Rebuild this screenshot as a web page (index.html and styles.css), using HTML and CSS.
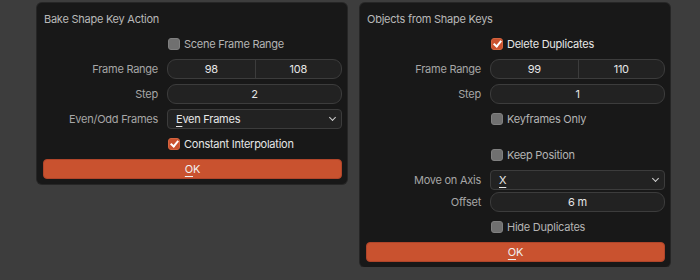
FILE: index.html
```html
<!DOCTYPE html>
<html lang="en">
<head>
    <meta charset="UTF-8">
    <title>Shape Key Operators</title>
    <link rel="stylesheet" href="styles.css">
</head>
<body>
    <div class="desk">
        <!-- Bake Shape Key Action -->
        <div class="panel">
            <div class="title">Bake Shape Key Action</div>
            <div class="row">
                <span class="label"></span>
                <label class="check"><span class="box"></span>Scene Frame Range</label>
            </div>
            <div class="row">
                <span class="label">Frame Range</span>
                <div class="field split"><span>98</span><span>108</span></div>
            </div>
            <div class="row">
                <span class="label">Step</span>
                <div class="field">2</div>
            </div>
            <div class="row">
                <span class="label">Even/Odd Frames</span>
                <div class="menu"><span><u>E</u>ven Frames</span><span class="chev"></span></div>
            </div>
            <div class="row">
                <span class="label"></span>
                <label class="check on"><span class="box"></span>Constant Interpolation</label>
            </div>
            <button class="ok"><u>O</u>K</button>
        </div>

        <!-- Objects from Shape Keys -->
        <div class="panel">
            <div class="title">Objects from Shape Keys</div>
            <div class="row">
                <span class="label"></span>
                <label class="check on"><span class="box"></span>Delete Duplicates</label>
            </div>
            <div class="row">
                <span class="label">Frame Range</span>
                <div class="field split"><span>99</span><span>110</span></div>
            </div>
            <div class="row">
                <span class="label">Step</span>
                <div class="field">1</div>
            </div>
            <div class="row">
                <span class="label"></span>
                <label class="check"><span class="box"></span>Keyframes Only</label>
            </div>
            <div class="row spaced">
                <span class="label"></span>
                <label class="check"><span class="box"></span>Keep Position</label>
            </div>
            <div class="row">
                <span class="label">Move on Axis</span>
                <div class="menu"><span><u>X</u></span><span class="chev"></span></div>
            </div>
            <div class="row joined">
                <span class="label">Offset</span>
                <div class="field">6 m</div>
            </div>
            <div class="row">
                <span class="label"></span>
                <label class="check"><span class="box"></span>Hide Duplicates</label>
            </div>
            <button class="ok"><u>O</u>K</button>
        </div>
    </div>
</body>
</html>
```

FILE: styles.css
```css
body {
    margin: 0;
    background-color: #3d3d3d;
    font-family: Inter, "Noto Sans", sans-serif;
    font-size: 11px;
    letter-spacing: -0.25px;
    color: #e6e6e6;
}
.desk {
    display: flex;
    align-items: flex-start;
    gap: 13px;
    padding: 3px 0 0 37px;
}
.panel {
    width: 299px;
    padding: 6px 5px 5px 6px;
    background-color: #181818;
    border-radius: 5px;
    box-shadow: 0 0 0 1px #262626;
    display: flex;
    flex-direction: column;
    gap: 5px;
}
.title {
    height: 20px;
    line-height: 20px;
    padding-left: 1px;
    color: #b8b8b8;
}
.row {
    display: grid;
    grid-template-columns: 115px 1fr;
    column-gap: 9px;
    height: 20px;
    align-items: center;
}
.row.spaced {
    margin-top: 11px;
}
.row.joined {
    margin-top: -3px;
}
.label {
    text-align: right;
    color: #a6a6a6;
}
.field {
    height: 18px;
    line-height: 18px;
    border: 1px solid #3c3c3c;
    border-radius: 9px;
    background-color: #222;
    text-align: center;
}
.field.split {
    display: grid;
    grid-template-columns: 1fr 1fr;
}
.field.split span + span {
    border-left: 1px solid #3c3c3c;
}
.menu {
    height: 18px;
    line-height: 18px;
    border: 1px solid #3c3c3c;
    border-radius: 4px;
    background-color: #222;
    display: flex;
    justify-content: space-between;
    align-items: center;
    padding: 0 6px 0 8px;
}
u {
    text-decoration-thickness: 1px;
    text-underline-offset: 3px;
}
.chev {
    width: 4px;
    height: 4px;
    border-right: 1.5px solid #d0d0d0;
    border-bottom: 1.5px solid #d0d0d0;
    transform: translateY(-2px) rotate(45deg);
}
.check {
    display: flex;
    align-items: center;
    gap: 4px;
    color: #b4b4b4;
    margin-left: 1px;
}
.box {
    width: 10px;
    height: 10px;
    border: 1px solid #808080;
    border-radius: 3px;
    background-color: #707070;
    position: relative;
}
.check.on {
    color: #e6e6e6;
}
.check.on .box {
    background-color: #c9522f;
    border-color: #d5643f;
}
.check.on .box::after {
    content: "";
    position: absolute;
    left: 3px;
    top: 0px;
    width: 3px;
    height: 6px;
    border-right: 2px solid #fff;
    border-bottom: 2px solid #fff;
    transform: rotate(40deg);
}
.ok {
    height: 20px;
    margin: 0;
    padding: 0;
    border: 1px solid #b0452a;
    border-radius: 4px;
    background-color: #c9522f;
    color: #f0f0f0;
    font-family: inherit;
    font-size: 11px;
    letter-spacing: inherit;
    line-height: 18px;
}
```
